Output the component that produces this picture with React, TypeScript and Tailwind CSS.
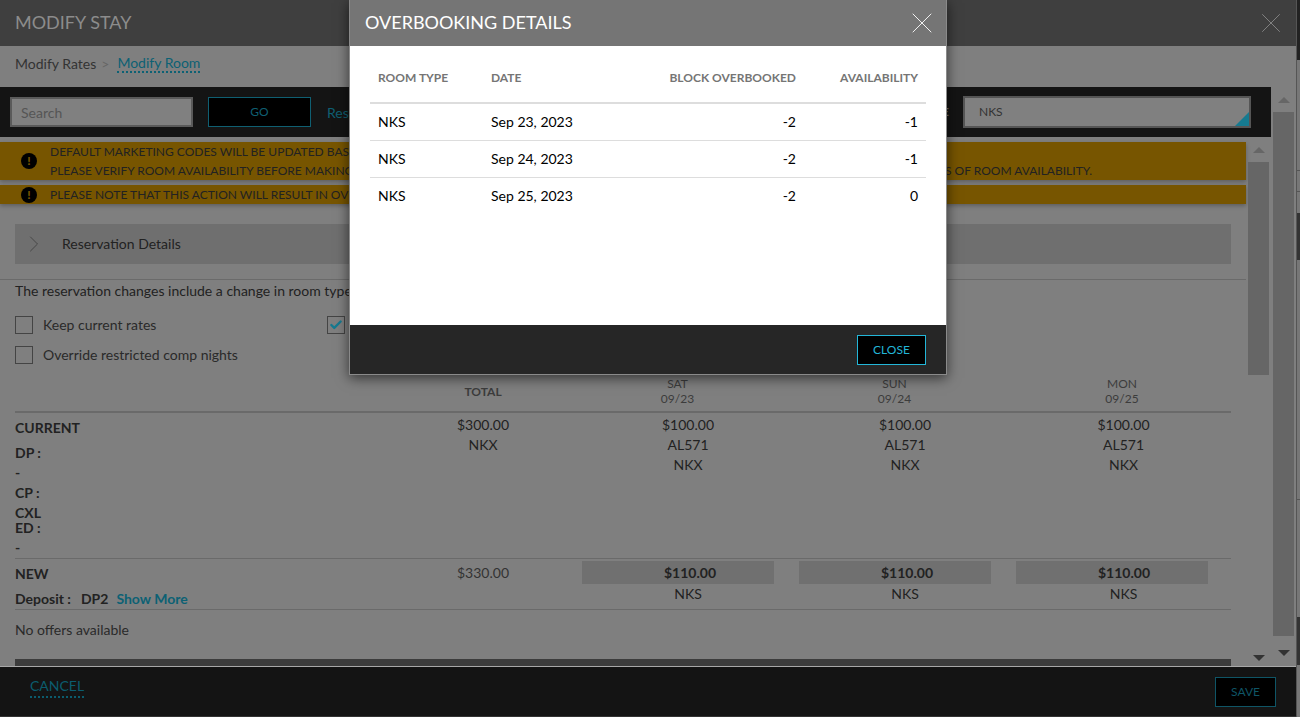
import type { ReactNode } from 'react';
import { Check, ChevronRight, X } from 'lucide-react';

// ---------------------------------------------------------------------------
// Data
// ---------------------------------------------------------------------------

const overbooked = [
  { room: 'NKS', date: 'Sep 23, 2023', block: '-2', avail: '-1' },
  { room: 'NKS', date: 'Sep 24, 2023', block: '-2', avail: '-1' },
  { room: 'NKS', date: 'Sep 25, 2023', block: '-2', avail: '0' },
];

const rateGrid = 'grid grid-cols-[369px_198px_217px_217px_215px]';

// ---------------------------------------------------------------------------
// Page
// ---------------------------------------------------------------------------

export default function App() {
  return (
    <div className="relative flex h-[717px] w-[1300px] overflow-hidden bg-[#7f7f7f] font-['Lato',sans-serif] text-[14px] text-[#222]">
      <div className="flex h-full w-[1296px] shrink-0 flex-col">
        <header className="flex h-[46px] shrink-0 items-center justify-between bg-[#3f3f3f] pl-[15px] pr-[8px]">
          <h1 className="mb-[2px] text-[18px] text-[#8c8c8c]">MODIFY STAY</h1>
          <X className="h-[34px] w-[34px] text-[#8c8c8c]" strokeWidth={0.6} />
        </header>

        <div className="flex h-[41px] shrink-0 items-center pb-[7px] pl-[15px]">
          <span className="text-[#333]">Modify Rates</span>
          <span className="ml-[5px] text-[#666]">&gt;</span>
          <span className="ml-[8px] border-b-2 border-dotted border-[#0c6174] leading-[17px] text-[#0c6174]">Modify Room</span>
        </div>

        <div className="flex min-h-0 flex-1">
          <div className="flex w-[1271px] shrink-0 flex-col">
            <Toolbar />
            <div className="flex min-h-0 flex-1">
              <Content />
              <div className="ml-[2px]">
                <Scrollbar top={10} thumb={213} arrowGap={280} />
              </div>
            </div>
          </div>
          <div className="ml-[2px]">
            <Scrollbar top={10} thumb={524} arrowGap={14} />
          </div>
        </div>

        <footer className="flex h-[51px] shrink-0 items-center justify-between border-t border-b border-t-[#a8a8a8] border-b-[#333] bg-[#141414] pl-[30px] pr-[20px]">
          <span className="mb-[10px] border-b-2 border-dotted border-[#0b5c6e] text-[#0b5c6e]">CANCEL</span>
          <DarkButton label="SAVE" className="h-[30px] w-[61px] border-[#0f5566] text-[#0f5566]" />
        </footer>
      </div>

      <PageEdge />
      <OverbookingModal />
    </div>
  );
}

// Sliver of the page underneath the Modify Stay window
function PageEdge() {
  return (
    <div className="flex h-full flex-1 flex-col border-l border-[#555] bg-[#777]">
      <div className="h-[60px] bg-[#222]" />
      <div className="h-[111px] border-b border-[#555]" />
      <div className="h-[21px] border-b border-[#555]" />
      <div className="h-[21px]" />
      <div className="h-[47px] bg-[#333]" />
      <div className="h-[240px] border-b border-[#555]" />
      <div className="h-[117px]" />
      <div className="h-[48px] bg-[#333]" />
    </div>
  );
}

// ---------------------------------------------------------------------------
// Toolbar
// ---------------------------------------------------------------------------

function Toolbar() {
  return (
    <div className="flex h-[50px] shrink-0 items-center bg-[#141414] pl-[10px] pr-[20px]">
      <div className="flex h-[30px] w-[183px] shrink-0 items-center border-2 border-[#5a5a5a] bg-[#808080] pl-[9px] text-[#555]">Search</div>
      <DarkButton label="GO" className="ml-[15px] h-[30px] w-[103px] shrink-0 border-[#0f5f72] text-[#0f5f72]" />
      <span className="ml-[16px] text-[#0f5f72]">Reset</span>
      <span className="ml-auto text-right text-[12px] font-bold whitespace-nowrap text-[#777]">TYPE</span>
      <div className="relative ml-[14px] flex h-[32px] w-[288px] shrink-0 items-center border-2 border-[#555] bg-[#808080] pl-[14px] text-[12px] text-[#333]">
        NKS
        <span className="absolute right-0 bottom-0 h-0 w-0 border-b-[14px] border-l-[14px] border-b-[#167a90] border-l-transparent" />
      </div>
    </div>
  );
}

function DarkButton({ label, className }: { label: string; className: string }) {
  return (
    <div className={`flex items-center justify-center border bg-black text-[12px] ${className}`}>{label}</div>
  );
}

function Scrollbar({ top, thumb, arrowGap }: { top: number; thumb: number; arrowGap: number }) {
  return (
    <div className="flex w-[21px] flex-col items-center" style={{ paddingTop: top }}>
      <span className="h-0 w-0 border-x-[6px] border-b-[6px] border-x-transparent border-b-[#666]" />
      <div className="mt-[9px] w-[21px] bg-[#666]" style={{ height: thumb }} />
      <span className="h-0 w-0 border-x-[6px] border-t-[6px] border-x-transparent border-t-[#333]" style={{ marginTop: arrowGap }} />
    </div>
  );
}

// ---------------------------------------------------------------------------
// Content behind the dialog
// ---------------------------------------------------------------------------

function Content() {
  return (
    <div className="flex w-[1246px] shrink-0 flex-col pt-[5px]">
      <Banner className="h-[38px]">
        <p>DEFAULT MARKETING CODES WILL BE UPDATED BASED ON THE NEW ROOM TYPE.</p>
        <p className="whitespace-nowrap">PLEASE VERIFY ROOM AVAILABILITY BEFORE MAKING ANY CHANGE TO THIS RESERVATION, AS THE SELECTED ROOM TYPE MAY BE OVERBOOKED REGARDLESS OF ROOM AVAILABILITY.</p>
      </Banner>
      <Banner className="mt-[5px] h-[19px]">
        <p>PLEASE NOTE THAT THIS ACTION WILL RESULT IN OVERBOOKING.</p>
      </Banner>

      <div className="mx-[15px] mt-[20px] flex h-[40px] w-[1216px] shrink-0 items-center bg-[#6f6f6f] pl-[5px]">
        <ChevronRight className="h-[28px] w-[28px] text-[#444]" strokeWidth={0.8} />
        <span className="mb-[2px] ml-[14px] text-[#222]">Reservation Details</span>
      </div>

      <div className="mt-[15px] border-t border-[#6a6a6a] pl-[15px] pt-[1px] leading-[20px]">
        The reservation changes include a change in room type.
      </div>

      <div className="mt-[15px] grid grid-cols-[312px_1fr] gap-y-[12px] pl-[15px] leading-[18px]">
        <CheckRow label="Keep current rates" />
        <CheckRow label="Update rates" checked />
        <CheckRow label="Override restricted comp nights" />
      </div>

      <RateTable />
    </div>
  );
}

function Banner({ className, children }: { className: string; children: ReactNode }) {
  return (
    <div className={`flex shrink-0 items-center bg-[#775500] pl-[21px] text-[12px] text-[#222] shadow-[0_2px_4px_rgba(0,0,0,0.25)] ${className}`}>
      <span className="flex h-[16px] w-[16px] shrink-0 items-center justify-center rounded-full bg-black text-[12px] font-black text-[#775500]">!</span>
      <div className="ml-[13px] leading-[19px]">{children}</div>
    </div>
  );
}

function CheckRow({ label, checked }: { label: string; checked?: boolean }) {
  return (
    <div className="flex items-center">
      <span className="flex h-[18px] w-[18px] items-center justify-center border border-[#444]">
        {checked && <Check className="h-[14px] w-[14px] text-[#167a90]" strokeWidth={4} />}
      </span>
      <span className="ml-[10px] text-[#2a2a2a]">{label}</span>
    </div>
  );
}

function RateTable() {
  return (
    <div className="mx-[15px] mt-[12px] flex w-[1216px] flex-1 flex-col leading-[20px]">
      <div className={`${rateGrid} h-[37px] shrink-0 items-center border-b-2 border-[#6a6a6a] pb-[10px] text-center text-[12px] leading-[15px] text-[#3c3c3c]`}>
        <span />
        <span className="font-bold">TOTAL</span>
        <DayHead day="SAT" date="09/23" width="w-[191px]" />
        <DayHead day="SUN" date="09/24" width="w-[191px]" />
        <DayHead day="MON" date="09/25" width="w-[212px]" />
      </div>

      <div className={`${rateGrid} h-[146px] shrink-0 border-b border-[#6a6a6a] pt-[2px]`}>
        <div className="font-bold">
          <p className="pt-[3px] leading-[20px]">CURRENT</p>
          <p className="mt-[5px]">DP :</p>
          <p>-</p>
          <p>CP :</p>
          <p className="mt-[1px] pt-[1px] leading-[15px]">CXL</p>
          <p className="leading-[15px]">ED :</p>
          <p className="mt-[3px]">-</p>
        </div>
        <div className="text-center">
          <p>$300.00</p>
          <p>NKX</p>
        </div>
        <CurrentDay />
        <CurrentDay />
        <CurrentDay last />
      </div>

      <div className={`${rateGrid} h-[51px] shrink-0 border-b border-[#6a6a6a]`}>
        <div className="font-bold">
          <p className="pt-[5px]">NEW</p>
          <p className="mt-[5px] whitespace-nowrap">
            Deposit :<span className="ml-[10px]">DP2</span>
            <span className="ml-[8px] text-[#0c6174]">Show More</span>
          </p>
        </div>
        <div className="pt-[4px] text-center text-[#333]">$330.00</div>
        <NewDay />
        <NewDay />
        <NewDay last />
      </div>

      <p className="mt-[10px] text-[#2a2a2a]">No offers available</p>

      <div className="mt-auto h-[7px] shrink-0 bg-[#3c3c3c]" />
    </div>
  );
}

function DayHead({ day, date, width }: { day: string; date: string; width: string }) {
  return (
    <div className={width}>
      <p>{day}</p>
      <p>{date}</p>
    </div>
  );
}

function CurrentDay({ last }: { last?: boolean }) {
  return (
    <div className={`text-center ${last ? 'w-[215px]' : 'w-[212px]'}`}>
      <p>$100.00</p>
      <p>AL571</p>
      <p>NKX</p>
    </div>
  );
}

function NewDay({ last }: { last?: boolean }) {
  return (
    <div className={`pt-[2px] ${last ? 'w-[215px]' : 'w-[212px]'}`}>
      <div className="h-[23px] w-[192px] bg-[#707070]">
        <p className="w-[216px] text-center leading-[23px] font-bold">$110.00</p>
      </div>
      <p className="text-center">NKS</p>
    </div>
  );
}

// ---------------------------------------------------------------------------
// Dialog
// ---------------------------------------------------------------------------

function OverbookingModal() {
  return (
    <div className="absolute top-0 left-[349px] flex h-[375px] w-[598px] flex-col border border-t-0 border-[#8a8a8a] bg-white shadow-[0_3px_12px_rgba(0,0,0,0.6)]">
      <div className="flex h-[46px] shrink-0 items-center justify-between bg-[#757575] pl-[15px] pr-[6px]">
        <h2 className="mb-[2px] text-[18px] text-white">OVERBOOKING DETAILS</h2>
        <X className="h-[36px] w-[36px] text-white" strokeWidth={0.6} />
      </div>

      <div className="flex-1 px-[20px]">
        <div className="flex h-[58px] items-center border-b-2 border-[#ddd] px-[8px] pt-[8px] text-[12px] font-bold text-[#757575]">
          <span className="w-[113px]">ROOM TYPE</span>
          <span className="w-[120px]">DATE</span>
          <span className="w-[185px] text-right">BLOCK OVERBOOKED</span>
          <span className="flex-1 text-right">AVAILABILITY</span>
        </div>
        {overbooked.map((row, i) => (
          <div
            key={row.date}
            className={`flex h-[37px] items-center px-[8px] pb-[2px] text-[14px] text-black ${i < overbooked.length - 1 ? 'border-b border-[#ddd]' : ''}`}
          >
            <span className="w-[113px]">{row.room}</span>
            <span className="w-[120px]">{row.date}</span>
            <span className="w-[185px] text-right">{row.block}</span>
            <span className="flex-1 text-right">{row.avail}</span>
          </div>
        ))}
      </div>

      <div className="flex h-[49px] shrink-0 items-center justify-end bg-[#262626] pr-[20px]">
        <DarkButton label="CLOSE" className="h-[30px] w-[69px] border-[#23b6d8] text-[#23b6d8]" />
      </div>
    </div>
  );
}
